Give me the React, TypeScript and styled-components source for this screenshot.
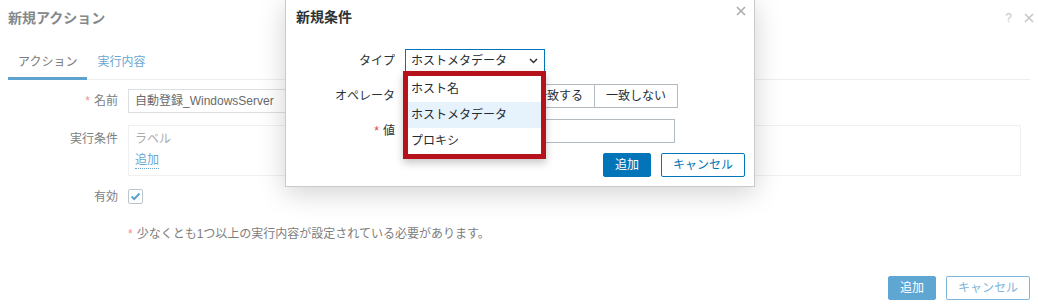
import styled, { createGlobalStyle } from "styled-components";

const GlobalStyle = createGlobalStyle`
  body {
    margin: 0;
    background: #fff;
    font-family: "Liberation Sans", "Noto Sans CJK JP", sans-serif;
    font-size: 12px;
  }
  * { box-sizing: border-box; }
`;

const Page = styled.div`
  position: relative;
  width: 1038px;
  height: 304px;
  overflow: hidden;
  background: #fff;
`;

/* background dialog (faded) */
const BackDialog = styled.div`
  padding: 0 8px;
  color: #7b7f82;
`;

const BackHeader = styled.div`
  height: 48px;
  display: flex;
  justify-content: space-between;
  align-items: flex-start;
  padding-top: 9px;
`;

const BackTitle = styled.h2`
  margin: 0;
  font-size: 14px;
  line-height: 18px;
  font-weight: bold;
  color: #85898c;
`;

const HeaderIcons = styled.div`
  display: flex;
  gap: 12px;
  margin-right: -4px;
  color: #c4c7c9;
  font-size: 12px;
  line-height: 18px;
  align-items: center;
`;

const TabBar = styled.div`
  display: flex;
  height: 32px;
  border-bottom: 1px solid #eceef0;
`;

const Tab = styled.div<{ $active?: boolean }>`
  padding: 0 10px;
  line-height: 29px;
  color: ${(p) => (p.$active ? "#7a7a7a" : "#6aa7d3")};
  border-bottom: 3px solid ${(p) => (p.$active ? "#5ea3cf" : "transparent")};
  margin-bottom: -1px;
`;

const Form = styled.div`
  display: grid;
  grid-template-columns: 110px 1fr;
  column-gap: 10px;
  row-gap: 12px;
  margin-top: 9px;
  padding-right: 9px;
`;

const Label = styled.div<{ $top?: number; $line?: number }>`
  text-align: right;
  line-height: ${(p) => p.$line ?? 24}px;
  padding-top: ${(p) => p.$top ?? 0}px;
  color: #7d7d7d;
  white-space: nowrap;
`;

const Star = styled.span<{ $faded?: boolean }>`
  color: ${(p) => (p.$faded ? "#f0938f" : "#e0433f")};
  margin-right: 4px;
`;

const BackInput = styled.div`
  width: 320px;
  height: 24px;
  border: 1px solid #dcdfe2;
  padding: 0 6px;
  line-height: 22px;
  color: #6a6a6a;
`;

const CondBox = styled.div`
  border: 1px solid #eef0f1;
  height: 51px;
  padding: 4px 6px;
  display: flex;
  flex-direction: column;
  align-items: flex-start;
  gap: 4px;
`;

const Placeholder = styled.div`
  color: #ababab;
  line-height: 18px;
`;

const DottedLink = styled.span`
  color: #6aa7d3;
  line-height: 16px;
  border-bottom: 1px dotted #6aa7d3;
`;

const CheckBox = styled.div`
  width: 15px;
  height: 15px;
  border: 1px solid #b9c6ce;
  border-radius: 2px;
  display: flex;
  align-items: center;
  justify-content: center;
`;

const Note = styled.div`
  grid-column: 2;
  margin-top: 9px;
  line-height: 16px;
  color: #7d7d7d;
`;

const BackFooter = styled.div`
  display: flex;
  justify-content: flex-end;
  gap: 10px;
  margin-top: 34px;
`;

const Button = styled.div<{ $primary?: boolean; $faded?: boolean }>`
  height: 24px;
  padding: 0 11px;
  line-height: 22px;
  border-radius: 2px;
  border: 1px solid ${(p) => (p.$faded ? "#7db7dc" : "#0275b8")};
  background: ${(p) =>
    p.$primary ? (p.$faded ? "#5fa6d3" : "#0275b8") : "#fff"};
  color: ${(p) =>
    p.$primary ? "#fff" : p.$faded ? "#80b6db" : "#0275b8"};
  ${(p) => p.$primary && p.$faded && "border-color: #5fa6d3;"}
`;

/* modal */
const Modal = styled.div`
  position: absolute;
  left: 285px;
  top: -1px;
  width: 470px;
  height: 188px;
  background: #fff;
  border: 1px solid #c6cbcf;
  box-shadow: 0 6px 26px rgba(0, 0, 0, 0.18);
  color: #1f2c33;
`;

const ModalHeader = styled.div`
  height: 49px;
  padding: 8px 10px 0;
`;

const ModalTitle = styled.h3`
  margin: 0;
  font-size: 14px;
  line-height: 18px;
  font-weight: bold;
  color: #2b3337;
`;

const CloseBtn = styled.div`
  position: absolute;
  right: 8px;
  top: 5px;
  width: 10px;
  height: 10px;
`;

const ModalBody = styled.div`
  display: grid;
  grid-template-columns: 99px auto;
  column-gap: 10px;
  row-gap: 11px;
  padding: 0 10px;
  justify-items: start;
`;

const ModalLabel = styled.div`
  justify-self: end;
  line-height: 24px;
  color: #2b3337;
`;

const SelectWrap = styled.div`
  position: relative;
`;

const Select = styled.div`
  width: 140px;
  height: 24px;
  border: 1px solid #0275b8;
  padding: 0 6px 0 5px;
  line-height: 22px;
  display: flex;
  justify-content: space-between;
  align-items: center;
  color: #1f2c33;
`;

const Dropdown = styled.div`
  position: absolute;
  left: -2px;
  top: 22px;
  width: 143px;
  border: 5px solid #b5121b;
  background: #fff;
  box-shadow: 0 4px 8px rgba(0, 0, 0, 0.22);
  z-index: 2;
`;

const Option = styled.div<{ $hover?: boolean }>`
  height: 26px;
  line-height: 26px;
  padding: 0 3px;
  background: ${(p) => (p.$hover ? "#e6f2fc" : "#fff")};
  color: #1f2c33;
`;

const RadioGroup = styled.div`
  display: flex;
`;

const RadioItem = styled.div`
  height: 24px;
  padding: 0 11px;
  line-height: 22px;
  border: 1px solid #b2bac0;
  margin-left: -1px;
  &:first-child {
    margin-left: 0;
  }
  color: #1f2c33;
`;

const ModalInput = styled.div`
  width: 270px;
  height: 24px;
  border: 1px solid #b2bac0;
`;

const ModalFooter = styled.div`
  display: flex;
  justify-content: flex-end;
  gap: 10px;
  padding: 10px 9px 0;
`;

const operators = ["含む", "含まない", "一致する", "一致しない"];
const types = ["ホスト名", "ホストメタデータ", "プロキシ"];

export default function App() {
  return (
    <Page>
      <GlobalStyle />
      <BackDialog>
        <BackHeader>
          <BackTitle>新規アクション</BackTitle>
          <HeaderIcons>
            <span>?</span>
            <svg width="10" height="10" viewBox="0 0 10 10">
              <path d="M1 1L9 9M9 1L1 9" stroke="#c4c7c9" strokeWidth="1.6" />
            </svg>
          </HeaderIcons>
        </BackHeader>
        <TabBar>
          <Tab $active>アクション</Tab>
          <Tab>実行内容</Tab>
        </TabBar>
        <Form>
          <Label>
            <Star $faded>*</Star>名前
          </Label>
          <BackInput>自動登録_WindowsServer</BackInput>
          <Label $top={2}>実行条件</Label>
          <CondBox>
            <Placeholder>ラベル</Placeholder>
            <DottedLink>追加</DottedLink>
          </CondBox>
          <Label $line={16} $top={1}>有効</Label>
          <CheckBox style={{ marginTop: 1 }}>
            <svg width="11" height="9" viewBox="0 0 11 9">
              <path d="M1.5 4.5L4.2 7L9.5 1.5" fill="none" stroke="#5ea3cf" strokeWidth="2" />
            </svg>
          </CheckBox>
          <Note>
            <Star $faded>*</Star>少なくとも1つ以上の実行内容が設定されている必要があります。
          </Note>
        </Form>
        <BackFooter>
          <Button $primary $faded>追加</Button>
          <Button $faded>キャンセル</Button>
        </BackFooter>
      </BackDialog>

      <Modal>
        <ModalHeader>
          <ModalTitle>新規条件</ModalTitle>
        </ModalHeader>
        <CloseBtn>
          <svg width="10" height="10" viewBox="0 0 10 10">
            <path d="M1 1L9 9M9 1L1 9" stroke="#a9adb0" strokeWidth="1.6" />
          </svg>
        </CloseBtn>
        <ModalBody>
          <ModalLabel>タイプ</ModalLabel>
          <SelectWrap>
            <Select>
              <span>ホストメタデータ</span>
              <svg width="9" height="6" viewBox="0 0 9 6">
                <path d="M1 1L4.5 4.5L8 1" fill="none" stroke="#2b3337" strokeWidth="1.5" />
              </svg>
            </Select>
            <Dropdown>
              {types.map((t) => (
                <Option key={t} $hover={t === "ホストメタデータ"}>
                  {t}
                </Option>
              ))}
            </Dropdown>
          </SelectWrap>
          <ModalLabel>オペレータ</ModalLabel>
          <RadioGroup>
            {operators.map((o) => (
              <RadioItem key={o}>{o}</RadioItem>
            ))}
          </RadioGroup>
          <ModalLabel>
            <Star>*</Star>値
          </ModalLabel>
          <ModalInput />
        </ModalBody>
        <ModalFooter>
          <Button $primary>追加</Button>
          <Button>キャンセル</Button>
        </ModalFooter>
      </Modal>
    </Page>
  );
}
